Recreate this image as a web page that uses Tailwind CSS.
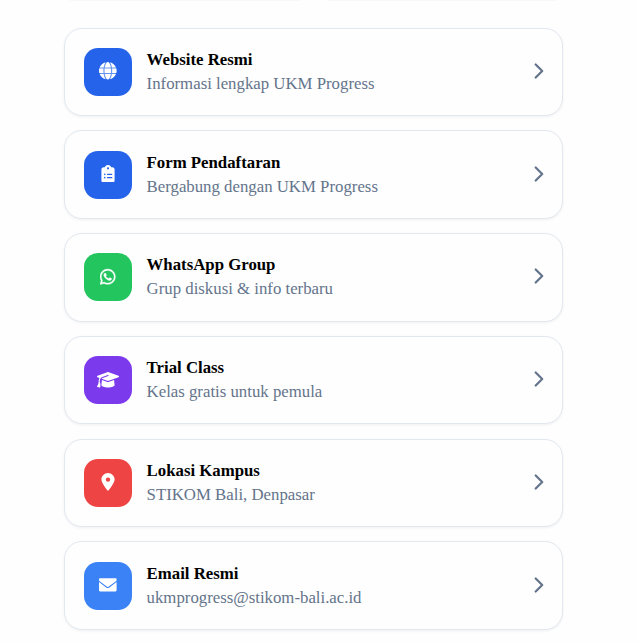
<!DOCTYPE html>
<html lang="id">
<head>
<meta charset="utf-8">
<title>UKM Progress</title>
<script src="https://cdn.jsdelivr.net/npm/@tailwindcss/browser@4"></script>
</head>
<body class="h-[643px] overflow-hidden bg-[#fefefe] font-['Liberation_Serif',serif] text-[16.8px]">
<div class="ml-[70px] flex h-[1px] w-[486px] gap-[27px]">
  <div class="flex-1 bg-[#f8f8f9]"></div>
  <div class="flex-1 bg-[#f8f8f9]"></div>
</div>
<main class="ml-[64px] mt-[26.61px] flex w-[499px] flex-col gap-[14.375px]">
  <a class="flex h-[88.4px] items-center gap-[14.4px] rounded-[18px] border border-[#e2e8f0] bg-[#fefefe] px-[19.2px] shadow-[0_1px_3px_rgba(0,0,0,0.06)]">
    <span class="flex size-12 shrink-0 items-center justify-center rounded-[14px] bg-[#2563eb] pb-[2px] text-white"><svg class="h-[17.6px] w-[17.6px]" viewBox="0 0 512 512" fill="currentColor"><circle cx="256" cy="256" r="250" fill-opacity=".3"/><path d="M352 256c0 22.2-1.2 43.6-3.3 64H163.3c-2.2-20.4-3.3-41.8-3.3-64s1.2-43.6 3.3-64H348.7c2.2 20.4 3.3 41.8 3.3 64zm28.8-64H503.9c5.3 20.5 8.1 41.9 8.1 64s-2.8 43.5-8.1 64H380.8c2.1-20.6 3.2-42 3.2-64s-1.1-43.4-3.2-64zm112.6-32H376.7c-10-63.9-29.8-117.4-55.3-151.6c78.3 20.7 142 77.5 171.9 151.6zm-149.1 0H167.7c6.1-36.4 15.5-68.6 27-94.7c10.5-23.6 22.2-40.7 33.5-51.5C239.4 3.2 248.7 0 256 0s16.6 3.2 27.8 13.8c11.3 10.8 23 27.9 33.5 51.5c11.6 26 20.9 58.2 27 94.7zm-209 0H18.6C48.6 85.9 112.2 29.1 190.6 8.4C165.1 42.6 145.3 96.1 135.3 160zM8.1 192H131.2c-2.1 20.6-3.2 42-3.2 64s1.1 43.4 3.2 64H8.1C2.8 299.5 0 278.1 0 256s2.8-43.5 8.1-64zM194.7 446.6c-11.6-26-20.9-58.2-27-94.6H344.3c-6.1 36.4-15.5 68.6-27 94.6c-10.5 23.6-22.2 40.7-33.5 51.5C272.6 508.8 263.3 512 256 512s-16.6-3.2-27.8-13.8c-11.3-10.8-23-27.9-33.5-51.5zM135.3 352c10 63.9 29.8 117.4 55.3 151.6C112.2 482.9 48.6 426.1 18.6 352H135.3zm358.1 0c-30 74.1-93.6 130.9-171.9 151.6c25.5-34.2 45.2-87.7 55.3-151.6H493.4z"/></svg></span>
    <span class="flex-1 leading-6"><b class="block text-black">Website Resmi</b><span class="block text-[#64748b]">Informasi lengkap UKM Progress</span></span>
    <svg class="-mr-px mb-[2px] h-[16px] w-[10px] shrink-0 text-[#64748b]" viewBox="0 0 10 16" fill="none" stroke="currentColor" stroke-width="2.2" stroke-linecap="round" stroke-linejoin="round"><path d="M1.700 1.500L8.200 8l-6.500 6.500"/></svg>
  </a>
  <a class="flex h-[88.4px] items-center gap-[14.4px] rounded-[18px] border border-[#e2e8f0] bg-[#fefefe] px-[19.2px] shadow-[0_1px_3px_rgba(0,0,0,0.06)]">
    <span class="flex size-12 shrink-0 items-center justify-center rounded-[14px] bg-[#2563eb] pb-[2px] text-white"><svg class="h-[17.6px] w-[14px]" viewBox="0 0 384 512" fill="currentColor"><path d="M192 0c-41.800 0-77.400 26.700-90.500 64H64C28.700 64 0 92.700 0 128V448c0 35.300 28.700 64 64 64H320c35.300 0 64-28.700 64-64V128c0-35.300-28.700-64-64-64H282.500C269.400 26.700 233.800 0 192 0zm0 64a32 32 0 1 1 0 64 32 32 0 1 1 0-64zM72 272a24 24 0 1 1 48 0 24 24 0 1 1 -48 0zm104-16H304c8.800 0 16 7.200 16 16s-7.200 16-16 16H176c-8.800 0-16-7.200-16-16s7.200-16 16-16zM72 368a24 24 0 1 1 48 0 24 24 0 1 1 -48 0zm88 0c0-8.800 7.200-16 16-16H304c8.800 0 16 7.200 16 16s-7.200 16-16 16H176c-8.800 0-16-7.200-16-16z"/></svg></span>
    <span class="flex-1 leading-6"><b class="block text-black">Form Pendaftaran</b><span class="block text-[#64748b]">Bergabung dengan UKM Progress</span></span>
    <svg class="-mr-px mb-[2px] h-[16px] w-[10px] shrink-0 text-[#64748b]" viewBox="0 0 10 16" fill="none" stroke="currentColor" stroke-width="2.2" stroke-linecap="round" stroke-linejoin="round"><path d="M1.700 1.500L8.200 8l-6.500 6.500"/></svg>
  </a>
  <a class="flex h-[88.4px] items-center gap-[14.4px] rounded-[18px] border border-[#e2e8f0] bg-[#fefefe] px-[19.2px] shadow-[0_1px_3px_rgba(0,0,0,0.06)]">
    <span class="flex size-12 shrink-0 items-center justify-center rounded-[14px] bg-[#22c55e] pb-px text-white"><svg class="h-[17.6px] w-[15.4px]" viewBox="0 0 448 512" fill="currentColor" stroke="currentColor" stroke-width="12"><path d="M380.900 97.100C339 55.100 283.200 32 223.900 32c-122.400 0-222 99.600-222 222 0 39.100 10.200 77.300 29.600 111L0 480l117.700-30.900c32.400 17.700 68.900 27 106.100 27h.1c122.300 0 224.100-99.600 224.100-222 0-59.300-25.200-115-67.100-157zm-157 341.600c-33.200 0-65.700-8.900-94-25.700l-6.700-4-69.800 18.300L72 359.200l-4.400-7c-18.500-29.400-28.200-63.300-28.200-98.200 0-101.700 82.800-184.500 184.600-184.500 49.300 0 95.600 19.200 130.400 54.100 34.800 34.900 56.200 81.200 56.100 130.500 0 101.800-84.900 184.600-186.600 184.600zm101.200-138.200c-5.500-2.800-32.800-16.200-37.900-18-5.100-1.900-8.800-2.800-12.500 2.800-3.700 5.600-14.300 18-17.600 21.800-3.200 3.700-6.500 4.200-12 1.400-32.600-16.300-54-29.100-75.500-66-5.700-9.800 5.700-9.100 16.300-30.300 1.800-3.700.9-6.900-.5-9.700-1.400-2.800-12.500-30.100-17.100-41.200-4.500-10.800-9.100-9.300-12.500-9.500-3.200-.2-6.900-.2-10.600-.2-3.700 0-9.700 1.400-14.800 6.900-5.100 5.600-19.400 19-19.400 46.300 0 27.300 19.900 53.700 22.600 57.400 2.800 3.700 39.100 59.700 94.800 83.800 35.200 15.200 49 16.500 66.600 13.900 10.700-1.600 32.800-13.400 37.400-26.400 4.600-13 4.600-24.100 3.200-26.400-1.300-2.500-5-3.900-10.500-6.600z"/></svg></span>
    <span class="flex-1 leading-6"><b class="block text-black">WhatsApp Group</b><span class="block text-[#64748b]">Grup diskusi &amp; info terbaru</span></span>
    <svg class="-mr-px mb-[2px] h-[16px] w-[10px] shrink-0 text-[#64748b]" viewBox="0 0 10 16" fill="none" stroke="currentColor" stroke-width="2.2" stroke-linecap="round" stroke-linejoin="round"><path d="M1.700 1.500L8.200 8l-6.500 6.500"/></svg>
  </a>
  <a class="flex h-[88.4px] items-center gap-[14.4px] rounded-[18px] border border-[#e2e8f0] bg-[#fefefe] px-[19.2px] shadow-[0_1px_3px_rgba(0,0,0,0.06)]">
    <span class="flex size-12 shrink-0 items-center justify-center rounded-[14px] bg-[#7c3aed] pb-px text-white"><svg class="h-[17.6px] w-[22px]" viewBox="0 0 640 512" fill="currentColor"><path d="M320 32c-8.100 0-16.100 1.400-23.700 4.100L15.800 137.400C6.300 140.900 0 149.900 0 160s6.300 19.100 15.800 22.600l57.900 20.900C57.300 229.300 48 259.800 48 291.900v28.100c0 28.400-10.800 57.700-22.300 80.800c-6.500 13-13.900 25.800-22.500 37.600C0 442.700-.9 448.300 .9 453.400s6 8.900 11.200 10.200l64 16c4.200 1.100 8.700 .3 12.400-2s6.300-6.100 7.100-10.400c8.600-42.800 4.300-81.200-2.100-108.700C90.300 344.300 86 329.800 80 316.500V291.900c0-30.200 10.200-58.700 27.900-81.500c12.900-15.500 29.600-28 49.200-35.700l157-61.700c8.200-3.200 17.500 .8 20.700 9s-.8 17.500-9 20.700l-157 61.700c-12.400 4.900-23.300 12.400-32.200 21.600l159.600 57.600c7.600 2.700 15.600 4.100 23.700 4.100s16.100-1.400 23.700-4.100L624.200 182.600c9.500-3.400 15.800-12.500 15.800-22.600s-6.300-19.100-15.800-22.600L343.700 36.100C336.100 33.400 328.100 32 320 32zM128 408c0 35.300 86 72 192 72s192-36.700 192-72L496.700 262.600 354.500 314c-11.100 4-22.800 6-34.500 6s-23.500-2-34.500-6L143.300 262.600 128 408z"/></svg></span>
    <span class="flex-1 leading-6"><b class="block text-black">Trial Class</b><span class="block text-[#64748b]">Kelas gratis untuk pemula</span></span>
    <svg class="-mr-px mb-[2px] h-[16px] w-[10px] shrink-0 text-[#64748b]" viewBox="0 0 10 16" fill="none" stroke="currentColor" stroke-width="2.2" stroke-linecap="round" stroke-linejoin="round"><path d="M1.700 1.500L8.200 8l-6.500 6.500"/></svg>
  </a>
  <a class="flex h-[88.4px] items-center gap-[14.4px] rounded-[18px] border border-[#e2e8f0] bg-[#fefefe] px-[19.2px] shadow-[0_1px_3px_rgba(0,0,0,0.06)]">
    <span class="flex size-12 shrink-0 items-center justify-center rounded-[14px] bg-[#ef4444] pb-[2px] text-white"><svg class="h-[17.6px] w-[14px]" viewBox="0 0 384 512" fill="currentColor"><path d="M215.700 499.200C267 435 384 279.400 384 192C384 86 298 0 192 0S0 86 0 192c0 87.400 117 243 168.300 307.200c12.300 15.300 35.100 15.300 47.400 0zM192 128a64 64 0 1 1 0 128 64 64 0 1 1 0-128z"/></svg></span>
    <span class="flex-1 leading-6"><b class="block text-black">Lokasi Kampus</b><span class="block text-[#64748b]">STIKOM Bali, Denpasar</span></span>
    <svg class="-mr-px mb-[2px] h-[16px] w-[10px] shrink-0 text-[#64748b]" viewBox="0 0 10 16" fill="none" stroke="currentColor" stroke-width="2.2" stroke-linecap="round" stroke-linejoin="round"><path d="M1.700 1.500L8.200 8l-6.500 6.500"/></svg>
  </a>
  <a class="flex h-[88.4px] items-center gap-[14.4px] rounded-[18px] border border-[#e2e8f0] bg-[#fefefe] px-[19.2px] shadow-[0_1px_3px_rgba(0,0,0,0.06)]">
    <span class="flex size-12 shrink-0 items-center justify-center rounded-[14px] bg-[#3b82f6] pb-[2px] text-white"><svg class="h-[17.6px] w-[17.6px]" viewBox="0 0 512 512" fill="currentColor"><path d="M30 64C12 64 0 78 0 96v20c0 13 7.100 25.300 19.200 34.400L236.800 313.600c11.400 8.500 27 8.500 38.400 0L492.800 150.400c12.100-9.100 19.200-21.400 19.200-34.400V96c0-18-12-32-30-32H30zM0 176V416c0 18 14 32 32 32H480c18 0 32-14 32-32V176L294.400 339.200c-22.800 17.100-54 17.100-76.800 0L0 176z"/></svg></span>
    <span class="flex-1 leading-6"><b class="block text-black">Email Resmi</b><span class="block text-[#64748b]">ukmprogress@stikom-bali.ac.id</span></span>
    <svg class="-mr-px mb-[2px] h-[16px] w-[10px] shrink-0 text-[#64748b]" viewBox="0 0 10 16" fill="none" stroke="currentColor" stroke-width="2.2" stroke-linecap="round" stroke-linejoin="round"><path d="M1.700 1.500L8.200 8l-6.500 6.500"/></svg>
  </a>
</main>
</body>
</html>
